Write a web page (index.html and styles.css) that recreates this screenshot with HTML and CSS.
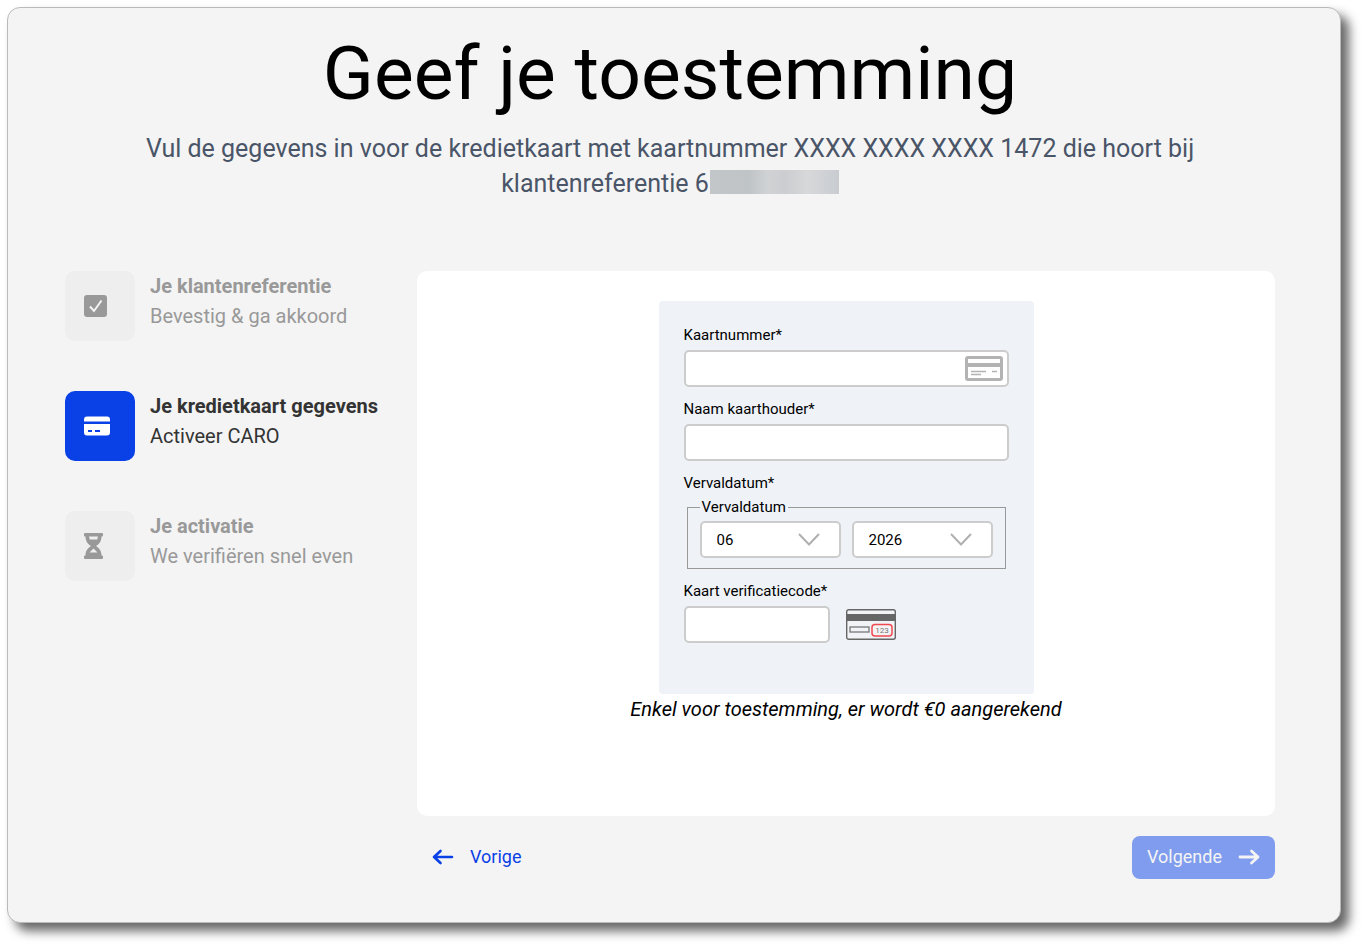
FILE: index.html
```html
<!DOCTYPE html>
<html lang="nl">
<head>
<meta charset="utf-8">
<meta name="viewport" content="width=device-width, initial-scale=1">
<title>Geef je toestemming</title>
<link rel="stylesheet" href="styles.css">
</head>
<body>
<main class="panel">
  <header class="intro">
    <h1 class="intro-title">Geef je toestemming</h1>
    <p class="intro-text">Vul de gegevens in voor de kredietkaart met kaartnummer XXXX XXXX XXXX 1472 die hoort bij klantenreferentie 6<span class="masked"></span></p>
  </header>

  <div class="columns">
    <ol class="steps">
      <li class="step">
        <span class="step-icon">
          <svg width="24" height="24" viewBox="0 0 24 24" aria-hidden="true"><rect x="0" y="1" width="23" height="22" rx="3" fill="currentColor"/><path d="M6 12.500l4 4.500 7.500-10.500" fill="none" stroke="#f4f4f4" stroke-width="2"/></svg>
        </span>
        <div class="step-text"><strong class="step-title">Je klantenreferentie</strong><span>Bevestig &amp; ga akkoord</span></div>
      </li>
      <li class="step step-active" aria-current="step">
        <span class="step-icon">
          <svg width="26" height="20" viewBox="0 0 26 20" aria-hidden="true"><path fill="currentColor" d="M3 .5h20a3 3 0 0 1 3 3V5.500H0V3.500a3 3 0 0 1 3-3zM0 8h26v8.500a3 3 0 0 1-3 3H3a3 3 0 0 1-3-3z"/><path d="M4 15h4M11 15h5" stroke="#0a41e6" stroke-width="2"/></svg>
        </span>
        <div class="step-text"><strong class="step-title">Je kredietkaart gegevens</strong><span>Activeer CARO</span></div>
      </li>
      <li class="step">
        <span class="step-icon">
          <svg width="20" height="26" viewBox="0 0 20 26" aria-hidden="true"><path fill="currentColor" fill-rule="evenodd" d="M1 0h17a1 1 0 0 1 1 1v1.500a1 1 0 0 1-1 1h-.5c0 5-2.500 7.500-5.500 9.500 3 2 5.500 4.500 5.500 9.500h.5a1 1 0 0 1 1 1V25a1 1 0 0 1-1 1H1a1 1 0 0 1-1-1v-1.500a1 1 0 0 1 1-1h.5c0-5 2.500-7.500 5.500-9.500-3-2-5.500-4.500-5.500-9.500H1a1 1 0 0 1-1-1V1a1 1 0 0 1 1-1zM5 3.500l.8 3h7.400l.8-3zM9.500 15.500l-4 4h8z"/></svg>
        </span>
        <div class="step-text"><strong class="step-title">Je activatie</strong><span>We verifiëren snel even</span></div>
      </li>
    </ol>

    <section class="content">
      <div class="card">
        <form class="payment" id="payment">
          <div class="field">
            <label for="number">Kaartnummer*</label>
            <div class="input-wrap">
              <input class="control" id="number" type="text" inputmode="numeric">
              <svg class="card-icon" width="38" height="26" viewBox="0 0 38 26" aria-hidden="true"><rect x="1.500" y="1.500" width="35" height="22" rx="1.500" fill="#fff" stroke="#b3b3b3" stroke-width="3"/><path d="M1 9h36" stroke="#b3b3b3" stroke-width="4"/><path d="M6 15.500h15M27 15.500h5M6 18.500h10" stroke="#b3b3b3" stroke-width="1.400"/></svg>
            </div>
          </div>
          <div class="field">
            <label for="holder">Naam kaarthouder*</label>
            <input class="control" id="holder" type="text">
          </div>
          <div class="field field-date">
            <span>Vervaldatum*</span>
            <fieldset class="expiry">
              <legend>Vervaldatum</legend>
              <div class="expiry-row">
                <div class="select-wrap">
                  <select class="control" aria-label="Maand"><option>06</option></select>
                  <svg class="chevron" width="22" height="13" viewBox="0 0 22 13" aria-hidden="true"><path d="M1 1l10 10.500L21 1" fill="none" stroke="#b0b0b0" stroke-width="2"/></svg>
                </div>
                <div class="select-wrap">
                  <select class="control" aria-label="Jaar"><option>2026</option></select>
                  <svg class="chevron" width="22" height="13" viewBox="0 0 22 13" aria-hidden="true"><path d="M1 1l10 10.500L21 1" fill="none" stroke="#b0b0b0" stroke-width="2"/></svg>
                </div>
              </div>
            </fieldset>
          </div>
          <div class="field">
            <label for="code">Kaart verificatiecode*</label>
            <div class="code-row">
              <input class="control control-code" id="code" type="text" inputmode="numeric">
              <svg width="50" height="31" viewBox="0 0 50 31" aria-hidden="true"><rect x=".7" y=".7" width="48.600" height="29.600" rx="2" fill="#f1f3f6" stroke="#666" stroke-width="1.400"/><path d="M1 8.500h48" stroke="#666" stroke-width="7"/><rect x="4" y="18" width="19" height="5" fill="none" stroke="#777" stroke-width="1.300"/><rect x="26" y="15.500" width="20" height="11.500" rx="3" fill="#f6f3f4" stroke="#ee4a50" stroke-width="1.500"/><text class="code-sample" x="36" y="24" text-anchor="middle">123</text></svg>
            </div>
          </div>
        </form>
        <p class="note">Enkel voor toestemming, er wordt €0 aangerekend</p>
      </div>
      <div class="actions">
        <button class="button button-back" type="button">
          <svg width="22" height="16" viewBox="0 0 22 16" aria-hidden="true"><path d="M20 8H2M8.500 2l-6.500 6 6.500 6" fill="none" stroke="currentColor" stroke-width="2.600" stroke-linecap="round" stroke-linejoin="round"/></svg>
          Vorige
        </button>
        <button class="button button-next" type="submit" form="payment">
          Volgende
          <svg width="22" height="16" viewBox="0 0 22 16" aria-hidden="true"><path d="M2 8h18M13.500 2l6.500 6-6.500 6" fill="none" stroke="currentColor" stroke-width="2.800" stroke-linecap="round" stroke-linejoin="round"/></svg>
        </button>
      </div>
    </section>
  </div>
</main>
</body>
</html>
```
FILE: styles.css
```css
* {
  box-sizing: border-box;
}

body {
  margin: 0;
  padding: 7px 23px 23px 7px;
  background: #fff;
  color: #000;
  font-family: Roboto, "Liberation Sans", sans-serif;
}

.panel {
  padding: 22px 65px 43px 57px;
  border: 1px solid #bababa;
  border-radius: 13px;
  background: #f4f4f4;
  box-shadow: 8px 8px 11px rgba(0, 0, 0, 0.6);
}

.intro {
  margin-bottom: 70px;
  text-align: center;
}

.intro-title {
  margin: 0 0 15px;
  font-size: 75px;
  font-weight: 400;
  line-height: 86px;
}

.intro-text {
  max-width: 1090px;
  margin: 0 auto;
  color: #4a5568;
  font-size: 25px;
  line-height: 35px;
}

.masked {
  display: inline-block;
  width: 129px;
  height: 24px;
  margin-left: 1px;
  vertical-align: -2px;
  background: linear-gradient(90deg, #c2c6c9, #bfc4c7 30%, #d0d2d4 45%, #cbcdd0 58%, #d7d8da 76%, #c8ccd0);
}

.columns {
  display: grid;
  grid-template-columns: 352px minmax(0, 1fr);
}

.steps {
  display: flex;
  flex-direction: column;
  gap: 50px;
  margin: 0;
  padding: 0;
  list-style: none;
}

.step {
  display: flex;
  gap: 15px;
  color: #999;
  font-size: 20px;
  line-height: 30px;
}

.step-active {
  color: #333;
}

.step-icon {
  display: flex;
  align-items: center;
  width: 70px;
  height: 70px;
  padding-left: 19px;
  border-radius: 10px;
  background: #eee;
}

.step-active .step-icon {
  background: #0a41e6;
  color: #fff;
}

.step-text {
  display: flex;
  flex-direction: column;
}

.step-title {
  font-weight: 700;
}

.card {
  display: flex;
  flex-direction: column;
  align-items: center;
  min-height: 545px;
  padding: 30px;
  border-radius: 10px;
  background: #fff;
}

.payment {
  display: flex;
  flex-direction: column;
  gap: 12px;
  width: 100%;
  max-width: 375px;
  padding: 24px 25px 51px;
  border-radius: 4px;
  background: #eff3f8;
  font-size: 15px;
  line-height: 20px;
}

.field {
  display: flex;
  flex-direction: column;
  gap: 5px;
}

.field-date {
  gap: 4px;
}

.control {
  width: 100%;
  height: 37px;
  padding: 0 15px;
  border: 2px solid #ccc;
  border-radius: 5px;
  background: #fff;
  color: #000;
  font: inherit;
  appearance: none;
}

.control-code {
  width: 146px;
}

.input-wrap,
.select-wrap {
  display: grid;
  position: relative;
}

.card-icon {
  position: absolute;
  top: 6px;
  right: 6px;
}

.chevron {
  position: absolute;
  top: 12px;
  right: 21px;
  pointer-events: none;
}

.expiry {
  min-width: 0;
  margin: 0 3px;
  padding: 4px 12px 10px;
  border: 1px solid #999;
}

.expiry legend {
  padding: 0 2px;
}

.expiry-row {
  display: grid;
  grid-template-columns: 1fr 1fr;
  gap: 11px;
}

.code-row {
  display: flex;
  align-items: center;
  gap: 16px;
}

.code-sample {
  fill: #777;
  font-size: 8px;
}

.note {
  margin: 0;
  font-size: 20px;
  font-style: italic;
  line-height: 30px;
}

.actions {
  display: flex;
  justify-content: space-between;
  margin-top: 20px;
}

.button {
  display: flex;
  align-items: center;
  gap: 16px;
  height: 43px;
  padding: 0 15px 2px;
  border: 0;
  border-radius: 8px;
  background: none;
  font: inherit;
  font-size: 18px;
}

.button-back {
  color: #0a41e6;
}

.button-next {
  background: #809cee;
  color: #f4f4f4;
}
```
